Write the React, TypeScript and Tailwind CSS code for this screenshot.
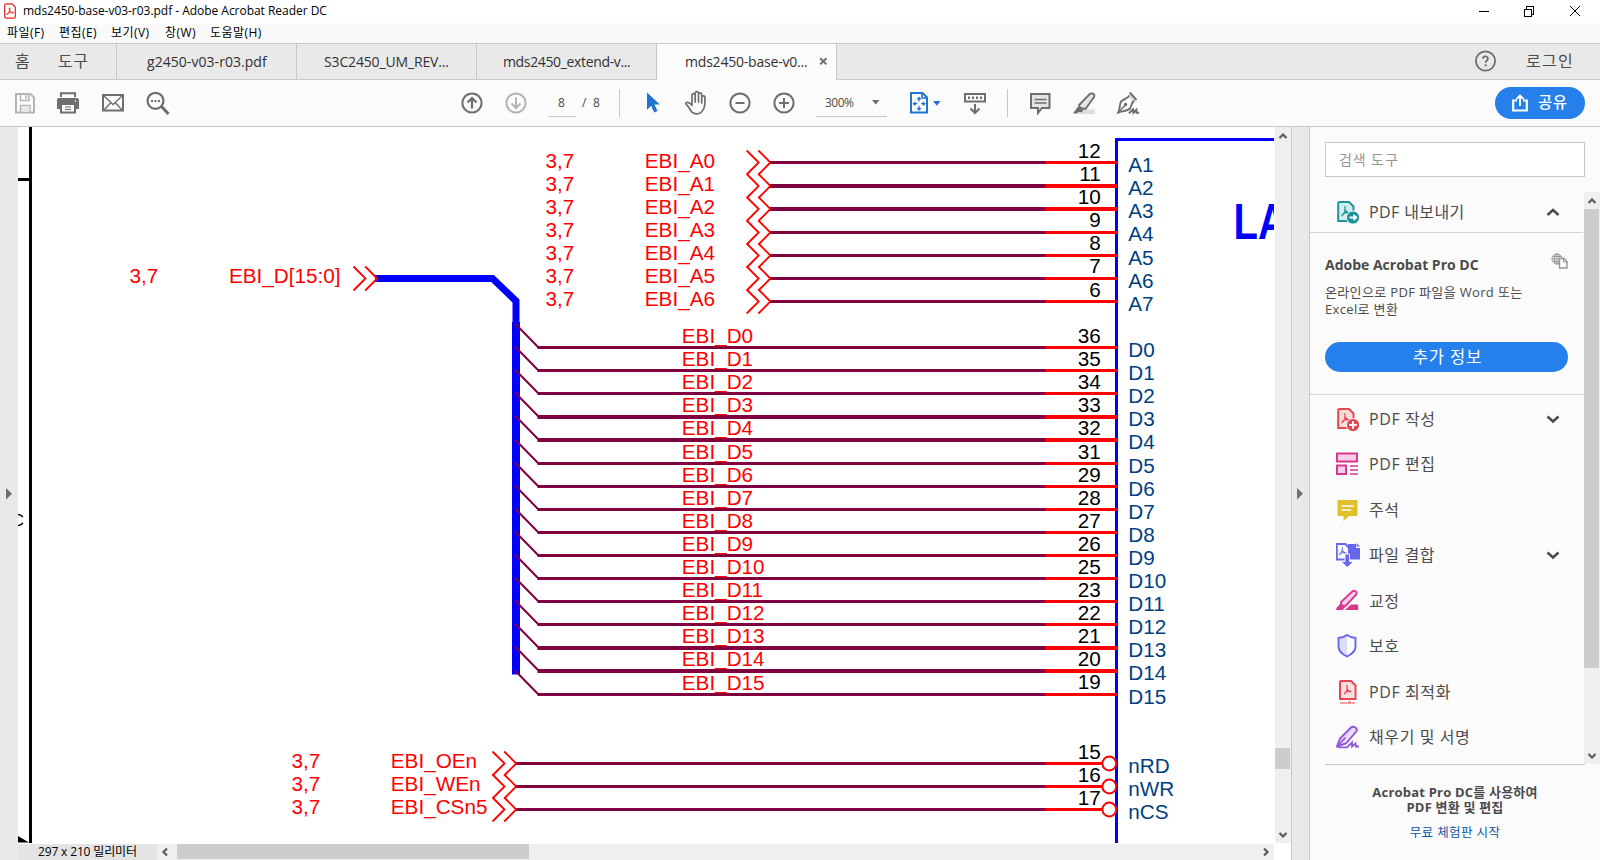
import React from "react";

const ADDRESS_PINS = [
  { pin: "12", y: 161, h: 3, label: 168, num: 158, name: 172 },
  { pin: "11", y: 184, h: 4, label: 191, num: 181, name: 195 },
  { pin: "10", y: 207, h: 4, label: 214, num: 204, name: 218 },
  { pin: "9", y: 231, h: 3, label: 237, num: 227, name: 241 },
  { pin: "8", y: 254, h: 3, label: 260, num: 250, name: 265 },
  { pin: "7", y: 277, h: 3, label: 283, num: 273, name: 288 },
  { pin: "6", y: 300, h: 3, label: 306, num: 297, name: 311 },
];

const DATA_PINS = [
  { pin: "36", y: 346, h: 3, label: 343, name: 357 },
  { pin: "35", y: 369, h: 3, label: 366, name: 380 },
  { pin: "34", y: 392, h: 3, label: 389, name: 403 },
  { pin: "33", y: 415, h: 4, label: 412, name: 426 },
  { pin: "32", y: 438, h: 4, label: 435, name: 449 },
  { pin: "31", y: 462, h: 3, label: 459, name: 473 },
  { pin: "29", y: 485, h: 3, label: 482, name: 496 },
  { pin: "28", y: 508, h: 3, label: 505, name: 519 },
  { pin: "27", y: 531, h: 3, label: 528, name: 542 },
  { pin: "26", y: 554, h: 3, label: 551, name: 565 },
  { pin: "25", y: 577, h: 3, label: 574, name: 588 },
  { pin: "23", y: 600, h: 3, label: 597, name: 611 },
  { pin: "22", y: 623, h: 3, label: 620, name: 634 },
  { pin: "21", y: 646, h: 4, label: 643, name: 657 },
  { pin: "20", y: 669, h: 4, label: 666, name: 680 },
  { pin: "19", y: 693, h: 3, label: 690, name: 704 },
];

const CONTROL_PINS = [
  { pin: "15", label: "EBI_OEn", name: "nRD", y: 762, ly: 768, ny: 759, my: 773 },
  { pin: "16", label: "EBI_WEn", name: "nWR", y: 785, ly: 791, ny: 782, my: 796 },
  { pin: "17", label: "EBI_CSn5", name: "nCS", y: 808, ly: 814, ny: 805, my: 819 },
];

const RED = "#ff0000";
const WIRE = "#800040";
const NAVY = "#004080";

function Chevrons({ x, y }: { x: number; y: number }) {
  return (
    <g fill="none" stroke={RED} strokeWidth="1.8">
      <path d={`M${x} ${y - 12}l12 12l-12 12`} />
      <path d={`M${x + 11.7} ${y - 12}l12 12l-12 12`} />
    </g>
  );
}

function Schematic() {
  return (
    <svg
      className="block shrink-0"
      width="1257"
      height="716"
      viewBox="18 127 1257 716"
      fontFamily="'Liberation Sans', Arial, sans-serif"
      fontSize="20.7"
    >
      <rect x="18" y="127" width="1257" height="716" fill="#fff" />
      <rect x="29" y="127" width="3" height="716" />
      <rect x="18" y="178" width="11" height="3" />
      <text x="12" y="526" fontSize="16.5">C</text>
      <path d="M18 836l11 6.5H18z" />

      <path d="M375 278.5H492.5L516 301V324" fill="none" stroke="#0000ff" strokeWidth="7" />
      <rect x="512" y="322" width="8" height="352.5" fill="#0000ff" />
      <g fill={RED}>
        <text x="129.6" y="283">3,7</text>
        <text x="229" y="283">EBI_D[15:0]</text>
      </g>
      <Chevrons x={353.5} y={278.5} />

      {ADDRESS_PINS.map((p, i) => {
        const mid = p.y + p.h / 2;
        return (
          <g key={p.pin}>
            <rect x="769" y={p.y} width="277" height={p.h} fill={WIRE} />
            <text x="545.4" y={p.label} fill={RED}>3,7</text>
            <text x="644.8" y={p.label} fill={RED}>{`EBI_A${i}`}</text>
            <text x="1100.8" y={p.num} textAnchor="end">{p.pin}</text>
            <text x="1128.3" y={p.name} fill={NAVY}>{`A${i + 1}`}</text>
            <Chevrons x={746.7} y={mid} />
          </g>
        );
      })}

      <path d="M1274 139.5H1116.5V843" fill="none" stroke="#0000ff" strokeWidth="3" />
      {ADDRESS_PINS.map((p) => (
        <rect key={p.pin} x="1045.5" y={p.y} width="72" height={p.h} rx="1" fill={RED} />
      ))}

      {DATA_PINS.map((p, i) => (
        <g key={p.pin}>
          <path d={`M515.5 ${p.y - 22}L538.5 ${p.y + 1.5}`} stroke={WIRE} strokeWidth="2" strokeLinecap="round" />
          <rect x="537.5" y={p.y} width="508.5" height={p.h} fill={WIRE} />
          <rect x="1045.5" y={p.y} width="72" height={p.h} rx="1" fill={RED} />
          <text x="681.8" y={p.label} fill={RED}>
            EBI<tspan dy="-1">_</tspan><tspan dy="1">{`D${i}`}</tspan>
          </text>
          <text x="1100.8" y={i === 15 ? 689 : p.label} textAnchor="end">{p.pin}</text>
          <text x="1128.3" y={p.name} fill={NAVY}>{`D${i}`}</text>
        </g>
      ))}

      {CONTROL_PINS.map((p) => (
        <g key={p.pin}>
          <rect x="516" y={p.y} width="530" height="3" fill={WIRE} />
          <rect x="1045.5" y={p.y} width="57" height="3" fill={RED} />
          <circle cx="1109.3" cy={p.y + 1.5} r="6.9" fill="#fff" stroke={RED} strokeWidth="2" />
          <text x="291.6" y={p.ly} fill={RED}>3,7</text>
          <text x="390.8" y={p.ly} fill={RED}>{p.label}</text>
          <text x="1100.8" y={p.ny} textAnchor="end">{p.pin}</text>
          <text x="1128.3" y={p.my} fill={NAVY}>{p.name}</text>
          <Chevrons x={492.5} y={p.y + 1.5} />
        </g>
      ))}

      <text transform="translate(1233.5 239) scale(0.8 1)" fontSize="50" fontWeight="700" fill="#0000ff">LA</text>
      <rect x="1274" y="127" width="1" height="716" fill="#fff" />
    </svg>
  );
}

function Icon({ className, w = 24, h = 24, children }: { className?: string; w?: number; h?: number; children: React.ReactNode }) {
  return (
    <svg className={`block shrink-0 ${className ?? ""}`} width={w} height={h} viewBox={`0 0 ${w} ${h}`} fill="none">
      {children}
    </svg>
  );
}

function TitleBar() {
  return (
    <div className="flex h-[23px] shrink-0 items-center bg-white pr-[19px] pb-px pl-1">
      <svg className="block" width="12" height="16" viewBox="0 0 12 16" fill="none">
        <path d="M.7 2Q.7.8 2 .8h6L11.300 4v9.800q0 1.300-1.300 1.300H2Q.7 15.100.7 13.800z" fill="#fff" stroke="#e2231a" strokeWidth="1.200" />
        <path d="M2.800 11.500c1.500-.8 3.100-3.700 3.200-6 0-1-.9-.9-.8.1.2 2.300 2 4.500 3.700 4.600 1 0 .9-1-.1-1-2 0-4.500.8-5.800 1.700-.6.500-.6.900-.2.600z" stroke="#e2231a" strokeWidth=".9" />
      </svg>
      <span className="ml-[7px] text-[12px] tracking-[-0.03px] whitespace-nowrap text-black">mds2450-base-v03-r03.pdf - Adobe Acrobat Reader DC</span>
      <svg className="ml-auto block" width="102" height="12" viewBox="0 0 102 12" fill="none" stroke="#000" shapeRendering="crispEdges">
        <path d="M0 6.500h10M45.500 4.500h7v7h-7zM47.500 4.500v-3h7v8h-2" />
        <path d="M91 1l10 10M101 1l-10 10" shapeRendering="auto" />
      </svg>
    </div>
  );
}

function MenuBar() {
  return (
    <div className="flex h-[21px] shrink-0 items-center border-b border-[#c8c8c8] bg-[#fafafa] pl-[7px] text-[12px] tracking-[0.45px] whitespace-nowrap text-black">
      <span className="w-[52px]">파일(F)</span>
      <span className="w-[52px]">편집(E)</span>
      <span className="w-[54px]">보기(V)</span>
      <span className="w-[45px]">창(W)</span>
      <span>도움말(H)</span>
    </div>
  );
}

function TabBar() {
  return (
    <div className="flex h-[36px] shrink-0 bg-[#e9e9e9] whitespace-nowrap">
      <div className="flex w-[117px] items-center border-r border-b border-[#c8c8c8] pb-px pl-[15px] text-[16px] tracking-[0.6px] text-[#4b4b4b]">
        <span className="w-[43px]">홈</span>
        <span>도구</span>
      </div>
      <div className="flex w-[180px] items-center border-r border-b border-[#c8c8c8] pl-[30px] text-[14px] tracking-[0.05px] text-[#323232]">g2450-v03-r03.pdf</div>
      <div className="flex w-[180px] items-center border-r border-b border-[#c8c8c8] pl-[27px] text-[14px] tracking-[-0.15px] text-[#323232]">S3C2450_UM_REV...</div>
      <div className="flex w-[180px] items-center border-r border-b border-[#c8c8c8] pl-[26px] text-[14px] tracking-[-0.35px] text-[#323232]">mds2450_extend-v...</div>
      <div className="flex w-[180px] items-center border-r border-[#c8c8c8] bg-[#fbfbfb] pb-px pl-[28px] text-[14px] tracking-[-0.2px] text-[#323232]">
        <span className="w-[134px]">mds2450-base-v0...</span>
        <Icon w={9} h={9}>
          <path d="M1.200 1.200l6.200 6.200M7.400 1.200L1.200 7.400" stroke="#6e6e6e" strokeWidth="2" />
        </Icon>
      </div>
      <div className="flex flex-1 items-center border-b border-[#c8c8c8] text-[#4b4b4b]">
        <Icon className="ml-[637px]">
          <circle cx="11.500" cy="11" r="9.600" stroke="#6e6e6e" strokeWidth="1.800" />
          <path d="M8.900 8.800c.2-3.200 5.200-3 5 0-.1 1.700-2.300 1.800-2.300 4" stroke="#6e6e6e" strokeWidth="1.800" />
          <rect x="10.600" y="14.300" width="2" height="2" fill="#6e6e6e" />
        </Icon>
        <span className="ml-[28px] pb-px text-[16px] tracking-[1.300px]">로그인</span>
      </div>
    </div>
  );
}

function Toolbar() {
  const g = "#6e6e6e";
  return (
    <div className="flex h-[47px] shrink-0 items-center border-b border-[#c8c8c8] bg-[#fbfbfb] text-[12px] whitespace-nowrap text-[#4b4b4b]">
      <Icon className="ml-[13px]">
        <path d="M3 3h14.500l3.500 3.500v15H3z" stroke="#b4b4b4" strokeWidth="2" />
        <path d="M7.500 3v6.500h8.500V3M13 4v4M7.500 21.500v-7h9.500v7" stroke="#b4b4b4" strokeWidth="1.500" />
        <rect x="8" y="15.200" width="8.500" height="5.500" fill="#e8e8e8" />
      </Icon>
      <Icon className="ml-[19px]">
        <path d="M5 6V2.300h14V6" stroke={g} strokeWidth="2" />
        <path d="M3 7h18a2 2 0 0 1 2 2v9h-4v-5H5v5H1V9a2 2 0 0 1 2-2z" fill={g} />
        <path d="M5 13h14v8.500H5z" fill="#fbfbfb" stroke={g} strokeWidth="2" />
        <path d="M9 16h6M9 18.500h6" stroke={g} />
        <circle cx="19.500" cy="10" r=".8" fill="#fff" />
      </Icon>
      <Icon className="ml-[21px]">
        <rect x="2" y="4" width="20" height="15.500" stroke={g} strokeWidth="2" />
        <path d="M3 5l9 8.500L21 5M3 19l6.500-7M21 19l-6.500-7" stroke={g} strokeWidth="1.400" />
      </Icon>
      <Icon className="ml-[21px]">
        <circle cx="9.500" cy="9.800" r="8" stroke={g} strokeWidth="2.200" />
        <path d="M15.500 15.500l7 7.500" stroke={g} strokeWidth="3" />
        <path d="M5 9h2v2H5zM8.500 9h2v2h-2zM12 9h2v2h-2z" fill={g} />
      </Icon>
      <Icon className="ml-[290px]">
        <circle cx="12" cy="12" r="9.600" stroke={g} strokeWidth="2" />
        <path d="M12 17.500V7.500M7.500 11.500L12 7l4.500 4.500" stroke={g} strokeWidth="2.200" />
      </Icon>
      <Icon className="ml-[20px]">
        <circle cx="12" cy="12" r="9.600" stroke="#b4b4b4" strokeWidth="2" />
        <path d="M12 6.500v10M7.500 12.500L12 17l4.500-4.500" stroke="#b4b4b4" strokeWidth="2" />
      </Icon>
      <div className="ml-[20px] flex h-[28px] w-[28px] items-center justify-center border-b border-[#c8c8c8] pr-px">8</div>
      <div className="ml-[6px] flex w-[37px] items-center">
        <span className="w-[11px]">/</span>
        <span>8</span>
      </div>
      <div className="h-[28px] w-px bg-[#c8c8c8]" />
      <Icon className="ml-[21px]">
        <path d="M6 1.500v17.200l4.200-4 3 6.800 3.300-1.400-3-6.600h5.300z" fill="#1e74d0" />
      </Icon>
      <Icon className="ml-[19px]" h={26}>
        <path
          d="M8 14.500V5.200a1.600 1.600 0 0 1 3.200 0V12 3.300a1.600 1.600 0 0 1 3.300 0V12 4.500a1.600 1.600 0 0 1 3.200 0V13 7.500a1.600 1.600 0 0 1 3.200 0c0 3 .6 7-.9 10.500-1.600 4-3.500 5.800-7.200 5.800-4.500 0-6-2.600-7.700-6-.9-1.600-2-2.600-3-3.600-.7-.9.200-2 1.500-1.900 2 .2 3.300 1.500 4.400 3z"
          stroke={g}
          strokeWidth="1.700"
          strokeLinejoin="round"
        />
      </Icon>
      <Icon className="ml-[20px]">
        <circle cx="12" cy="12" r="9.600" stroke={g} strokeWidth="2" />
        <path d="M7.500 12h9" stroke={g} strokeWidth="2" />
      </Icon>
      <Icon className="ml-[20px]">
        <circle cx="12" cy="12" r="9.600" stroke={g} strokeWidth="2" />
        <path d="M7 12h10M12 7v10" stroke={g} strokeWidth="2" />
      </Icon>
      <div className="ml-[20px] flex h-[28px] w-[71px] items-center border-b border-[#c8c8c8] pl-[9px]">
        <span className="w-[47px] tracking-[-0.5px]">300%</span>
        <Icon w={8} h={5}>
          <path d="M0 0h7.500L3.800 4.500z" fill={g} />
        </Icon>
      </div>
      <Icon className="ml-[21px]" w={34}>
        <path d="M3 2h11.500l4.500 4.500V21.500H3z" stroke="#1e74d0" strokeWidth="2" />
        <path d="M14 2v5h5" stroke="#1e74d0" strokeWidth="1.500" />
        <path d="M11 5.500l2.500 3h-5zM11 20l2.500-3h-5zM4.500 12.700l3-2.500v5zM17.800 12.700l-3-2.500v5z" fill="#1e74d0" />
        <path d="M11 8v2.500M11 15v2.500M7 12.700h2.300M13 12.700h2.300" stroke="#1e74d0" strokeWidth="1.300" />
        <path d="M25 10h7.500l-3.700 4.700z" fill="#1e74d0" />
      </Icon>
      <Icon className="ml-[21px]">
        <rect x="2" y="3" width="20" height="7.500" stroke={g} strokeWidth="2" />
        <path d="M5 5.500h2v2.500H5zM9 5.500h2v2.500H9zM13 5.500h2v2.500h-2zM17 5.500h2v2.500h-2z" fill={g} />
        <path d="M12 13v9M7.500 17.500L12 22l4.500-4.500" stroke={g} strokeWidth="2" />
      </Icon>
      <div className="ml-[20px] h-[28px] w-px bg-[#c8c8c8]" />
      <Icon className="ml-[20px]">
        <path d="M3 3h18.500v14H14l-4 5v-5H3z" fill="#e4e4e4" stroke={g} strokeWidth="2" />
        <path d="M6.500 8.500h12M6.500 12h12" stroke={g} strokeWidth="1.300" />
      </Icon>
      <Icon className="ml-[20px]">
        <path d="M6 18.500h17V23H6z" fill="#dedede" />
        <path d="M20.500 2.500c2 .5 2.200 2 1.500 3.500l-8.500 12-5.500-1-1-3L18 2.800q1-.7 2.500-.3z" fill="#e4e4e4" stroke={g} strokeWidth="1.900" />
        <path d="M6 15.500l5.500 3.500-1.800 2.200-3-.2L5 22.500H1z" fill={g} />
      </Icon>
      <Icon className="ml-[20px]">
        <path d="M14.500 2l6.500 7-3 2.500-6-6z" fill="#dedede" />
        <path d="M13.800 1.500L20.500 9M13.500 4.500C11 7.500 8 8 5 10.500 3.500 13.500 4 18 2.300 21.500 6.500 20 11 20.500 14 17.500c1.500-3 1.500-5.500 4-8" stroke={g} strokeWidth="1.900" />
        <path d="M2.500 21.500L8.800 14.500" stroke={g} strokeWidth="1.400" />
        <circle cx="9.500" cy="13.500" r="1.700" fill={g} />
        <path d="M13 22.300l4-4 .5 3.500 2.800-3 .4 3h2.500" stroke={g} strokeWidth="2" />
      </Icon>
      <div className="mr-[15px] ml-auto flex h-[32px] w-[90px] items-center rounded-full bg-[#2680eb] pl-[17px] text-[15.500px] font-medium tracking-[0.5px] text-white">
        <Icon w={16} h={18}>
          <path d="M5 6.500H1.200V16.500h13.600V6.500H11" stroke="#fff" strokeWidth="2.200" />
          <path d="M8 12V2.500M4.500 5L8 1.500 11.500 5" stroke="#fff" strokeWidth="1.900" />
        </Icon>
        <span className="ml-[10px] pb-px">공유</span>
      </div>
    </div>
  );
}

type ArrowDir = "up" | "down" | "left" | "right";
const ARROWS: Record<ArrowDir, string> = {
  up: "M1.500 7L5 3.500 8.500 7",
  down: "M1.500 3L5 6.500 8.500 3",
  left: "M7 1.500L3.500 5 7 8.500",
  right: "M3 1.500L6.500 5 3 8.500",
};

function ScrollArrow({ dir }: { dir: ArrowDir }) {
  return (
    <Icon w={10} h={10}>
      <path d={ARROWS[dir]} stroke="#5a5a5a" strokeWidth="2.200" />
    </Icon>
  );
}

function Viewer() {
  return (
    <div className="flex w-[1273px] shrink-0 flex-col bg-white">
      <div className="flex h-[716px]">
        <Schematic />
        <div className="flex w-[16px] flex-col items-center bg-[#efefef]">
          <div className="flex h-[17px] items-center pr-px"><ScrollArrow dir="up" /></div>
          <div className="mt-[604px] h-[21px] w-[15px] self-start bg-[#cdcdcd]" />
          <div className="mt-auto flex h-[17px] items-center pr-px"><ScrollArrow dir="down" /></div>
        </div>
      </div>
      <div className="h-px bg-white" />
      <div className="flex h-[16px] w-[1256px] items-center bg-[#efefef]">
        <div className="flex h-full w-[139px] items-center bg-[#e4e4e4] pl-[20px] text-[12px] tracking-[-0.15px] whitespace-nowrap text-black">297 x 210 밀리미터</div>
        <div className="flex w-[20px] justify-center pr-[4px]"><ScrollArrow dir="left" /></div>
        <div className="mb-px h-[15px] w-[352px] bg-[#cdcdcd]" />
        <div className="mr-[3px] ml-auto"><ScrollArrow dir="right" /></div>
      </div>
    </div>
  );
}

function PdfGlyph({ color, tint }: { color: string; tint: string }) {
  return (
    <>
      <path d="M2.200 3.200q0-1.200 1.200-1.200H13l4.500 4.500V21H2.200z" fill={tint} stroke={color} strokeWidth="2" />
      <path d="M9 6v3.500c0 3-1.500 5-3.500 6.500M9 9.500c.8 2.500 2 3.300 4.500 3.500M6.500 14c2-1 4-1.500 6.500-1.200" stroke={color} strokeWidth="1.200" />
    </>
  );
}

function Chevron({ up = false }: { up?: boolean }) {
  return (
    <Icon w={14} h={10}>
      <path d={up ? "M1.500 8L7 3l5.500 5" : "M1.500 2.500L7 7.500l5.500-5"} stroke="#4b4b4b" strokeWidth="2.500" />
    </Icon>
  );
}

const TOOLS: { label: string; more?: boolean; icon: React.ReactNode }[] = [
  {
    label: "PDF 작성",
    more: true,
    icon: (
      <>
        <PdfGlyph color="#e34850" tint="#f8dcdc" />
        <circle cx="17" cy="18" r="6.600" fill="#e34850" stroke="#fbfbfb" />
        <path d="M13.300 18h7.400M17 14.300v7.400" stroke="#fff" strokeWidth="2" />
      </>
    ),
  },
  {
    label: "PDF 편집",
    icon: (
      <>
        <rect x="1" y="1.500" width="20" height="8" fill="#f7cfe6" stroke="#d83790" strokeWidth="2" />
        <rect x="1" y="13.500" width="9" height="8.500" fill="#f7cfe6" stroke="#d83790" strokeWidth="2" />
        <path d="M14 14h8M14 18h8M14 22h8" stroke="#d83790" strokeWidth="1.300" />
      </>
    ),
  },
  {
    label: "주석",
    icon: (
      <>
        <path d="M2.500 2h18q1 0 1 1v14q0 1-1 1H13l-5.500 5V18h-5q-1 0-1-1V3q0-1 1-1z" fill="#dfbf2b" />
        <path d="M5.500 8H18M5.500 12H15" stroke="#fff" strokeWidth="1.600" />
      </>
    ),
  },
  {
    label: "파일 결합",
    more: true,
    icon: (
      <>
        <path d="M12 1h8v4h4v11.500H12z" fill="#6767ec" />
        <path d="M20.500 0l3.500 3.500h-3.500z" fill="#6767ec" />
        <path d="M.8 1h8.700l3.500 4v11.500H.8z" fill="#fbfbfb" stroke="#6767ec" strokeWidth="1.900" />
        <path d="M6.500 4.500c0 4-1 5.500-3.500 7.500M6.500 7.500c1 2 2 2.500 4 2.700M4 10.500c2-.8 4-1 6-.5" stroke="#6767ec" strokeWidth="1.100" />
        <path d="M9 11h4.500v7.500h4L11.300 24.500 5 18.500h4z" fill="#6767ec" stroke="#fbfbfb" strokeWidth=".9" />
      </>
    ),
  },
  {
    label: "교정",
    icon: (
      <>
        <path d="M9 21l6-5.500h6q1.200 0 1.200 1.200V21z" fill="#d83790" />
        <path d="M19.500 2.200c1.600 1 1.500 2.400.6 3.500L9.500 17 5.500 16.500 5 13 16 2.800q1.800-1.600 3.500-.6z" fill="#f7cfe6" stroke="#d83790" strokeWidth="1.900" />
        <path d="M4.500 14l4.500 4.500-2.500 2.500H0q0-3 2.500-4z" fill="#d83790" />
      </>
    ),
  },
  {
    label: "보호",
    icon: (
      <>
        <path d="M11 1.500v20.500Q3 17.500 3 12.500V4Q7 4 11 1.500z" fill="#dcdcfa" />
        <path d="M11 1q4 2.800 8.500 3V12.500q0 6-8.500 10Q2.500 18.500 2.500 12.500V4Q7 3.800 11 1z" stroke="#6767ec" strokeWidth="1.900" />
      </>
    ),
  },
  {
    label: "PDF 최적화",
    icon: (
      <>
        <path d="M4 2q0-1 1-1h10l4.500 4.500V19H4z" fill="#f8dfe0" stroke="#e34850" strokeWidth="2" />
        <path d="M11 5v3.500c0 3-1 4.500-3 5.500M11 9c.8 2 2 2.500 4.500 2.700M8.500 12.500c2-1 4-1.200 6-.8" stroke="#e34850" strokeWidth="1.200" />
        <path d="M4 23h7.500M16 23h3" stroke="#e34850" strokeWidth="1.200" />
        <circle cx="13.700" cy="22.800" r="1.200" stroke="#e34850" />
      </>
    ),
  },
  {
    label: "채우기 및 서명",
    icon: (
      <>
        <path d="M19 2.300c2.200 1.200 2.300 2.800 1.200 4.200L10 18.500 1 21.500 4 13.500 14.500 3q2.200-2 4.500-.7z" fill="#ead9f9" stroke="#9256d9" strokeWidth="1.900" />
        <path d="M1 21.500l8.500-9M2 22.300h9l5-5v4.200l3.500-3 .5 3h3" stroke="#9256d9" strokeWidth="1.800" />
      </>
    ),
  },
];

function ToolsPanel() {
  return (
    <div className="flex flex-1 flex-col bg-[#fbfbfb] text-[#4b4b4b]">
      <div className="mt-[15px] mr-[15px] ml-[15px] flex h-[35px] items-center border border-[#c8c8c8] bg-white pb-px pl-[13px] text-[14px] tracking-[0.9px] text-[#959595]">검색 도구</div>
      <div className="mt-[15px] flex h-[572px]">
        <div className="w-[273px]">
          <div className="flex h-[41px] items-center border-b border-[#d3d3d3] pl-[26px]">
            <Icon>
              <PdfGlyph color="#1c9399" tint="#d3ecec" />
              <circle cx="17" cy="17.500" r="6.600" fill="#1c9399" stroke="#fbfbfb" />
              <path d="M13.500 17.500h6.500M17.500 14.800l2.800 2.700-2.800 2.700" stroke="#fff" strokeWidth="1.800" />
            </Icon>
            <span className="ml-[9px] w-[177px] text-[16px] tracking-[0.4px] whitespace-nowrap">PDF 내보내기</span>
            <Chevron up />
          </div>
          <div className="h-[162px] border-b border-[#d3d3d3] pr-[15px] pl-[15px]">
            <div className="flex h-[48px] items-end justify-between pb-[6px]">
              <span className="text-[14px] leading-[20px] font-bold whitespace-nowrap">Adobe Acrobat Pro DC</span>
              <Icon className="mb-[6px]" w={17} h={16}>
                <circle cx="6" cy="6" r="5" stroke="#959595" />
                <path d="M6 1v10M1 6h10M2 3.500h8M2 8.500h8" stroke="#959595" />
                <ellipse cx="6" cy="6" rx="2.500" ry="5" stroke="#959595" />
                <path d="M8.500 5.500h4.500l3 3v6.500H8.500z" fill="#fbfbfb" stroke="#959595" strokeWidth="1.400" />
                <path d="M12.500 5.500v3.500H16" stroke="#959595" />
              </Icon>
            </div>
            <p className="mt-[3px] text-[13px] leading-[17px] tracking-[0.35px] whitespace-nowrap">
              온라인으로 PDF 파일을 Word 또는
              <br />
              Excel로 변환
            </p>
            <div className="mt-[24px] flex h-[30px] items-center justify-center rounded-full bg-[#2680eb] pl-[2px] text-[16.500px] tracking-[0.9px] text-white">추가 정보</div>
          </div>
          <div className="pt-[1px]">
            {TOOLS.map((t) => (
              <div key={t.label} className="flex h-[45.500px] items-center pl-[26px]">
                <Icon>{t.icon}</Icon>
                <span className="ml-[9px] w-[177px] text-[16px] tracking-[0.6px] whitespace-nowrap">{t.label}</span>
                {t.more && <Chevron />}
              </div>
            ))}
          </div>
        </div>
        <div className="ml-px flex w-[16px] flex-col items-center bg-[#efefef]">
          <div className="flex h-[17px] items-center pr-px"><ScrollArrow dir="up" /></div>
          <div className="h-[459px] w-[15px] self-start bg-[#cdcdcd]" />
          <div className="mt-auto flex h-[17px] items-center pr-px"><ScrollArrow dir="down" /></div>
        </div>
      </div>
      <div className="mr-[15px] ml-[15px] border-t border-[#c8c8c8] pt-[20px] text-center">
        <p className="text-[13px] leading-[15px] font-bold tracking-[0.2px] whitespace-nowrap">
          Acrobat Pro DC를 사용하여
          <br />
          PDF 변환 및 편집
        </p>
        <p className="mt-[10px] text-[12.500px] leading-[16px] tracking-[0.4px] text-[#0d57a8]">무료 체험판 시작</p>
      </div>
    </div>
  );
}

function PaneHandle() {
  return (
    <Icon w={6} h={12}>
      <path d="M0 0l6 5.800L0 11.500z" fill="#6e6e6e" />
    </Icon>
  );
}

export default function App() {
  return (
    <div className="flex h-[860px] w-[1600px] flex-col overflow-hidden bg-white font-['Open_Sans','Noto_Sans_CJK_KR',sans-serif]">
      <TitleBar />
      <MenuBar />
      <TabBar />
      <Toolbar />
      <div className="flex h-[733px]">
        <div className="flex w-[18px] shrink-0 items-center bg-[#e9e9e9] pl-[6px]"><PaneHandle /></div>
        <Viewer />
        <div className="flex w-[19px] shrink-0 items-center border-r border-l border-[#c8c8c8] bg-[#e9e9e9] pl-[5px]"><PaneHandle /></div>
        <ToolsPanel />
      </div>
    </div>
  );
}
